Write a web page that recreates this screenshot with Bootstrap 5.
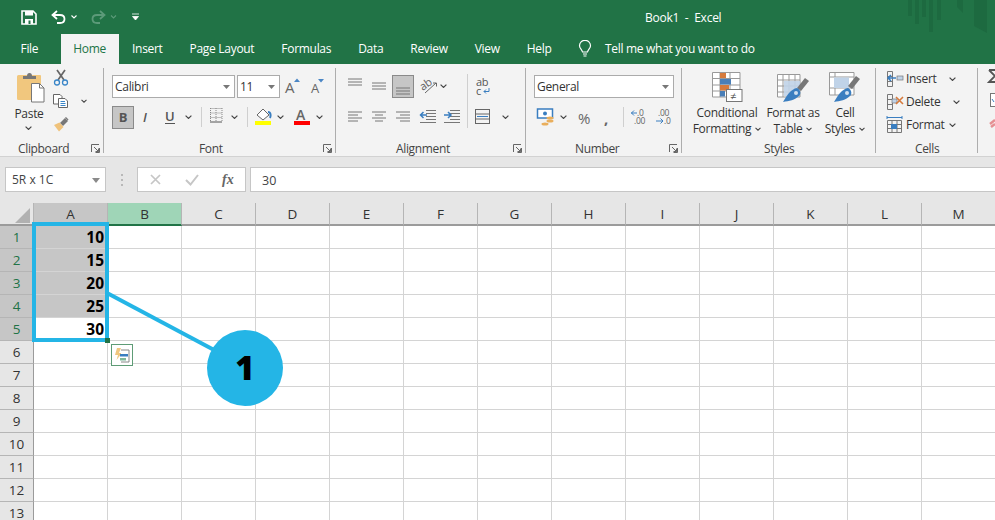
<!DOCTYPE html>
<html lang="en">
<head>
<meta charset="utf-8">
<title>Book1 - Excel</title>
<link href="https://cdn.jsdelivr.net/npm/bootstrap@5.3.0/dist/css/bootstrap.min.css" rel="stylesheet">
<style>
html,body{height:520px;overflow:hidden}
body{background:#fff;font-family:"Open Sans","Noto Sans",sans-serif;font-size:12px;color:#444;line-height:16px}
svg{display:block;flex:none}
svg text{font-family:"Open Sans","Noto Sans",sans-serif}
.xl-app{width:995px;height:520px;overflow:hidden}
.xl-title{height:34px;background:#217346;color:#fff;position:relative}
.xl-qat{padding-left:19px;width:160px}
.xl-doc{position:absolute;left:645px;top:10px;white-space:pre;letter-spacing:-.25px}
.xl-water{position:absolute;right:0;top:0}
.xl-tabs{height:30px;background:#217346;color:#fff;padding-left:7px;letter-spacing:-.3px}
.xl-tab{padding:0 13.5px;height:30px;line-height:29px;white-space:nowrap}
.xl-tab-file{margin-right:9px}
.xl-tab-on{background:#f3f3f3;color:#217346;padding:0 12.5px}
.xl-tell{margin-left:13px;gap:13px;white-space:nowrap}
.xl-ribbon{height:93px;background:#f3f3f3;border-bottom:1px solid #d2d2d2}
.rb-group{height:85px;margin-top:4px;border-right:1px solid #adadad;display:flex;flex-direction:column;flex:none}
.rb-clip{width:104px}.rb-font{width:232px}.rb-align{width:190px}.rb-num{width:156px}.rb-styles{width:194px}.rb-cells{width:102px}.rb-edit{width:17px;border-right:0}
.rb-body{height:72px;display:flex;flex:none;letter-spacing:-.3px}
.rb-label{height:13px;display:flex;letter-spacing:-.35px;line-height:18px;padding-right:3px}
.rb-label svg{margin:4px 0 0 auto}
.lb-clip{padding-left:18px}.lb-font{padding-left:95px}.lb-align{padding-left:60px}.lb-num{padding-left:49px}.lb-styles{padding-left:82px}.lb-cells{padding-left:39px}
.paste-col{width:38px;margin-left:12px;text-align:center}
.paste-icon{margin:4px auto 0}
.paste-word{margin:1px 4px 0 0;height:15px;color:#333}
.paste-caret{margin:5px 0 0 13px}
.font-col{padding:7px 0 0 8px}
.sel-box{height:23px;background:#fff;border:1px solid #ababab;display:flex;align-items:center;justify-content:space-between;padding:0 4px 0 2px;color:#333;flex:none}
.w-font{width:123px}.w-size{width:43px;margin-left:2px}.w-gen{width:140px}
.btn-bold{width:22px;height:23px;background:#c6c6c6;border:1px solid #8a8a8a;text-align:center;font-weight:700;line-height:21px;color:#555;font-size:13px;flex:none}
.font-row2{margin-top:8px}
.align-art{margin-left:10px}
.num-col{padding:7px 0 0 8px}
.num-row2{margin-top:6px}
.style-row{padding-left:6px}
.style-item{text-align:center;flex:none;line-height:16px;padding-top:4px;color:#333}
.style-item>svg{margin:0 auto 2px}
.si-a{width:78px}.si-b{width:54px}.si-c{width:50px}
.cell-row{height:20px;margin-bottom:3px;display:flex;align-items:center;color:#333}
.cells-col{padding:1px 0 0 10px;width:100%}
.xl-fbar{height:46px;background:#e6e6e6;padding:10px 0 0 5px}
.fb-name{width:101px;height:25px;background:#fff;border:1px solid #c6c6c6;padding:1px 5px 0 6px;display:flex;align-items:center;justify-content:space-between;flex:none}
.fb-tools{width:109px;height:25px;background:#fff;border:1px solid #c6c6c6;flex:none;margin-left:31px}
.fb-dots{position:absolute}
.fb-input{flex:1;height:25px;background:#fff;border:1px solid #c6c6c6;border-right:0;margin-left:4px;padding-left:11px;line-height:25px;font-size:12.5px}
.xl-sheet{position:relative;height:317px;overflow:hidden}
.xl-grid{border-collapse:separate;border-spacing:0;table-layout:fixed;width:996px}
.xl-grid th,.xl-grid td{height:23px;padding:0;border-right:1px solid #d4d4d4;border-bottom:1px solid #d4d4d4;box-sizing:border-box}
.xl-grid th{background:#e6e6e6;font-weight:400;text-align:center;font-size:13.5px;color:#333;line-height:20px}
.xl-grid thead th{border-right-color:#b5b5b5;border-bottom:2px solid #9b9b9b;vertical-align:middle}
.xl-grid tbody th{border-right:1px solid #9b9b9b;border-bottom-color:#b5b5b5}
.xl-grid .hd-first{width:34px;position:relative}
.xl-grid .hd-a{background:#c6c6c6}
.xl-grid .hd-b{background:#9fd5b7;border-bottom-color:#217346}
.xl-grid .hd-row-on{background:#c6c6c6;color:#217346}
.xl-grid td.val{text-align:right;padding-right:3px;font-weight:700;font-size:15.5px;color:#000;line-height:20px}
.xl-grid td.val-on{background:#c6c6c6}
.sel-frame{position:absolute;left:32px;top:19px;width:77px;height:120px;border:4px solid #24b5e6}
.sel-handle{position:absolute;left:105px;top:135px;width:5px;height:5px;background:#217346}
.callout{position:absolute;left:0;top:0}
.call-dot{position:absolute;left:207px;top:127px;width:76px;height:76px;border-radius:50%;background:#24b5e6;color:#000;font-weight:800;font-size:33px;line-height:76px;text-align:center}
.qa-btn{position:absolute;left:111px;top:141px;width:22px;height:22px;background:#fff;border:1px solid #5e9c76;padding:2px}
</style>
</head>
<body>
<svg width="0" height="0" style="position:absolute">
<symbol id="cv" viewBox="0 0 7 4"><path d="M.6.6 3.5 3.4 6.4.6" fill="none" stroke="#444" stroke-width="1.2"/></symbol>
<symbol id="lnch" viewBox="0 0 9 9"><path d="M.5 8V.5H8M8.5 4V8.5H4.500M3 3 7.5 7.5M7.5 4.5V7.5H4.500" fill="none" stroke="#666" stroke-width="1"/></symbol>
</svg>
<div class="xl-app d-flex flex-column">
  <div class="xl-title d-flex align-items-center">
    <div class="xl-qat d-flex align-items-center">
      <svg width="120" height="34" viewBox="19 0 120 34">
        <path d="M22 11H33L36 14V24H22Z" fill="none" stroke="#fff" stroke-width="1.6"/><rect x="25" y="11" width="8" height="4.5" fill="#fff"/><rect x="25" y="19" width="8" height="5" fill="#fff"/><rect x="28.5" y="20.5" width="2" height="3.5" fill="#217346"/>
        <path d="M57 11 52.5 15 57 19M53 15H60C66 15 66 23 60 23H57" fill="none" stroke="#fff" stroke-width="1.8"/>
        <path d="M71.500 15.500 74 18 76.500 15.500" fill="none" stroke="#fff" stroke-width="1.100"/>
        <path d="M100 11 104.500 15 100 19M104 15H97C91 15 91 23 97 23H100" fill="none" stroke="#5c9a79" stroke-width="1.8"/>
        <path d="M111 15.500 113.500 18 116 15.500" fill="none" stroke="#5c9a79" stroke-width="1.100"/>
        <path d="M132 14H139M132.500 16.500H138.500L135.500 20Z" fill="#fff" stroke="#fff" stroke-width=".8"/>
      </svg>
    </div>
    <div class="xl-doc">Book1  -  Excel</div>
    <svg class="xl-water" width="90" height="34" viewBox="905 0 90 34"><path d="M908 0H912V16H908ZM915 0H919V24H915ZM922 0H926V17H922ZM929 0H933V32H929ZM937 0H941V20H937ZM957 0H963V13L957 7ZM974 0H987V33L974 26Z" fill="#1d6a40"/></svg>
  </div>
  <div class="xl-tabs d-flex">
    <div class="xl-tab xl-tab-file">File</div>
    <div class="xl-tab xl-tab-on">Home</div>
    <div class="xl-tab">Insert</div>
    <div class="xl-tab">Page Layout</div>
    <div class="xl-tab">Formulas</div>
    <div class="xl-tab">Data</div>
    <div class="xl-tab">Review</div>
    <div class="xl-tab">View</div>
    <div class="xl-tab">Help</div>
    <div class="xl-tell d-flex align-items-center">
      <svg width="14" height="18" viewBox="0 0 14 18"><path d="M4.500 12C4 9.500 1.500 8.500 1.500 5.800A5.500 5.500 0 0 1 12.500 5.800C12.500 8.500 10 9.500 9.500 12ZM5 14H9M5.500 16H8.500" fill="none" stroke="#fff" stroke-width="1.200"/></svg>
      <span>Tell me what you want to do</span>
    </div>
  </div>

  <div class="xl-ribbon d-flex">
    <!-- Clipboard -->
    <div class="rb-group rb-clip">
      <div class="rb-body">
        <div class="paste-col">
          <svg class="paste-icon" width="30" height="33" viewBox="16 72 30 33">
            <path d="M18.500 75H40A1 1 0 0 1 41 76V99A1 1 0 0 1 40 100H18.500A1.500 1.500 0 0 1 17 98.500V76.500A1.500 1.500 0 0 1 18.500 75Z" fill="#f1c77e"/>
            <path d="M23 79V76H27A2.500 3 0 0 1 32 76H36V79Z" fill="#777"/>
            <path d="M31.500 83.500H39.500L44 88V102H31.500Z" fill="#fff" stroke="#777"/><path d="M39.500 83.500V88H44" fill="none" stroke="#777"/>
          </svg>
          <div class="paste-word">Paste</div>
          <svg class="paste-caret" width="7" height="4" viewBox="0 0 7 4"><use href="#cv"/></svg>
        </div>
        <svg width="40" height="68" viewBox="50 68 40 68">
          <path d="M57 70 64 80M65 70 58 80" stroke="#666" stroke-width="1.700"/>
          <circle cx="57" cy="82.500" r="2.500" fill="none" stroke="#3a86c8" stroke-width="1.300"/><circle cx="65" cy="82.500" r="2.500" fill="none" stroke="#3a86c8" stroke-width="1.300"/>
          <path d="M53.500 94.500H60L62 96.500V104H53.500Z" fill="#fff" stroke="#666"/><path d="M58.500 98.500H65L67.500 101V107.500H58.500Z" fill="#fff" stroke="#666"/><path d="M60.500 101.500H65M60.500 103.500H65.500M60.500 105.500H65.500" stroke="#3a86c8"/>
          <use href="#cv" x="81" y="99" width="6" height="4"/>
          <path d="M60 123 65 118 68 121 63 126Z" fill="#777"/><path d="M66 117 68.500 119.500 67.800 120.500 65 117.800Z" fill="#777"/><path d="M54 125 59.500 122.500 63.500 127 59 131.500Z" fill="#efc27b"/>
        </svg>
      </div>
      <div class="rb-label lb-clip"><span>Clipboard</span><svg width="9" height="9"><use href="#lnch"/></svg></div>
    </div>
    <!-- Font -->
    <div class="rb-group rb-font">
      <div class="rb-body">
        <div class="font-col">
          <div class="d-flex">
            <div class="sel-box w-font"><span>Calibri</span><svg width="7" height="4"><path d="M0 0H7L3.500 4Z" fill="#777"/></svg></div>
            <div class="sel-box w-size"><span>11</span><svg width="7" height="4"><path d="M0 0H7L3.500 4Z" fill="#777"/></svg></div>
            <svg width="50" height="23" viewBox="282 75 50 23">
              <text x="287" y="93" font-size="15" fill="#666">A</text><path d="M296 82 299 78.500 302 82Z" fill="#4a86c5"/>
              <text x="313" y="93" font-size="13" fill="#666">A</text><path d="M320 79H326L323 82.500Z" fill="#4a86c5"/>
            </svg>
          </div>
          <div class="d-flex font-row2">
            <div class="btn-bold">B</div>
            <svg width="196" height="23" viewBox="134 106 196 23">
              <text x="143" y="122" font-size="13" font-style="italic" font-weight="600" fill="#555">I</text>
              <text x="165" y="121" font-size="13" font-weight="600" fill="#555">U</text><path d="M165 123.500H175" stroke="#555"/>
              <use href="#cv" x="185" y="115" width="7" height="4"/>
              <path d="M201.500 107V127" stroke="#cfcfcf"/>
              <path d="M210.500 108.500H222M210.500 113H222M210.500 117.500H222M210.500 108V122M216 108V122M222 108V122" stroke="#888" stroke-dasharray="1 1" fill="none"/><path d="M210 122H222" stroke="#555"/>
              <use href="#cv" x="231" y="115" width="7" height="4"/>
              <path d="M247.500 107V127" stroke="#cfcfcf"/>
              <path d="M257 115 263 109 269 115 263 120Z" fill="#fff" stroke="#666"/><path d="M268 112C271 112 271 116 270 118" stroke="#3a7ec0" stroke-width="2" fill="none"/><rect x="255" y="121" width="16" height="4" fill="#ffff00"/>
              <use href="#cv" x="277" y="115" width="7" height="4"/>
              <text x="296" y="120" font-size="14" font-weight="600" fill="#666">A</text><rect x="294" y="121" width="16" height="4" fill="#ff0000"/>
              <use href="#cv" x="316" y="115" width="7" height="4"/>
            </svg>
          </div>
        </div>
      </div>
      <div class="rb-label lb-font"><span>Font</span><svg width="9" height="9"><use href="#lnch"/></svg></div>
    </div>
    <!-- Alignment -->
    <div class="rb-group rb-align">
      <div class="rb-body">
        <svg class="align-art" width="180" height="70" viewBox="346 68 180 70">
          <path d="M348 79H362M348 82H362M348 85H362" stroke="#777"/>
          <path d="M372 83H386M372 86H386M372 89H386" stroke="#777"/>
          <rect x="392.500" y="75.500" width="21" height="22" fill="#c6c6c6" stroke="#8a8a8a"/><path d="M396 88H410M396 91H410M396 94H410" stroke="#777"/>
          <text x="420" y="88" font-size="11" fill="#666" transform="rotate(-35 426 85)">ab</text><path d="M425 93 436 83M433 83H436.500V86.500" stroke="#666" fill="none"/>
          <use href="#cv" x="440" y="84" width="7" height="4"/>
          <path d="M467.500 74V128" stroke="#cfcfcf"/>
          <text x="476" y="86" font-size="11" fill="#555">ab</text><text x="476" y="95" font-size="11" fill="#555">c</text><path d="M489 88V91.500H484M486 89.500 484 91.500 486 93.500" fill="none" stroke="#3a7ec0"/>
          <path d="M348 112H362M348 115H358M348 118H362M348 121H358" stroke="#777"/>
          <path d="M372 112H386M375 115H383M372 118H386M375 121H383" stroke="#777"/>
          <path d="M396 112H410M400 115H410M396 118H410M400 121H410" stroke="#777"/>
          <path d="M426 110.500H436M426 113.500H436M426 116.500H436M426 119.500H436M420 122.500H436" stroke="#777"/><path d="M420 115H427M423.500 112 420.500 115 423.500 118" stroke="#3a7ec0" stroke-width="1.500" fill="none"/>
          <path d="M450 110.500H460M450 113.500H460M450 116.500H460M450 119.500H460M444 122.500H460" stroke="#777"/><path d="M444 115H451M448 112 451 115 448 118" stroke="#3a7ec0" stroke-width="1.500" fill="none"/>
          <rect x="475.500" y="109.500" width="14" height="14" fill="none" stroke="#666"/><path d="M475 114H490M475 119H490" stroke="#666"/><path d="M477 116.500H488" stroke="#3a7ec0"/>
          <use href="#cv" x="502" y="115" width="7" height="4"/>
        </svg>
      </div>
      <div class="rb-label lb-align"><span>Alignment</span><svg width="9" height="9"><use href="#lnch"/></svg></div>
    </div>
    <!-- Number -->
    <div class="rb-group rb-num">
      <div class="rb-body">
        <div class="num-col">
          <div class="sel-box w-gen"><span>General</span><svg width="7" height="4"><path d="M0 0H7L3.500 4Z" fill="#777"/></svg></div>
          <svg class="num-row2" width="140" height="24" viewBox="534 104 140 24">
            <rect x="537.500" y="109" width="15" height="9" fill="#fff" stroke="#3a7ec0" stroke-width="1.500"/><circle cx="545" cy="113.500" r="2" fill="#3a7ec0"/>
            <ellipse cx="550" cy="118" rx="3.500" ry="1.500" fill="#e9ae5c"/><ellipse cx="550" cy="121" rx="3.500" ry="1.500" fill="#e9ae5c"/><ellipse cx="545" cy="124" rx="3.500" ry="1.500" fill="#e9ae5c"/>
            <use href="#cv" x="560" y="115" width="7" height="4"/>
            <text x="578" y="124" font-size="15" fill="#666">%</text>
            <text x="604" y="124" font-size="15" font-weight="700" fill="#666">,</text>
            <path d="M623.500 107V127" stroke="#cfcfcf"/>
            <text x="637" y="116" font-size="8.500" fill="#666">.0</text><text x="634" y="124" font-size="8.500" fill="#666">.00</text><path d="M631 113H637M634 110.500 631.500 113 634 115.500" stroke="#3a7ec0" fill="none"/>
            <text x="658" y="116" font-size="8.500" fill="#666">.00</text><text x="664" y="124" font-size="8.500" fill="#666">.0</text><path d="M656 121H663M660.500 118.500 663 121 660.500 123.500" stroke="#3a7ec0" fill="none"/>
          </svg>
        </div>
      </div>
      <div class="rb-label lb-num"><span>Number</span><svg width="9" height="9"><use href="#lnch"/></svg></div>
    </div>
    <!-- Styles -->
    <div class="rb-group rb-styles">
      <div class="rb-body style-row">
        <div class="style-item si-a">
          <svg width="32" height="31" viewBox="712 72 32 31">
            <path d="M713.500 72.500H741V97H713.500ZM713.500 78.500H741M713.500 85H741M713.500 91H741M721 72V97M731 72V97" fill="#fff" stroke="#999"/>
            <rect x="721" y="73" width="6" height="5" fill="#d67a3c"/><rect x="721" y="79" width="11" height="5.500" fill="#4a7fb8"/><rect x="721" y="85" width="9" height="5.500" fill="#d67a3c"/><rect x="721" y="91" width="5" height="5.500" fill="#4a7fb8"/>
            <rect x="727.500" y="89.500" width="15.500" height="12" fill="#fff" stroke="#777"/><text x="731" y="100" font-size="11" fill="#555">≠</text>
          </svg>
          <div>Conditional</div>
          <div class="d-flex justify-content-center align-items-center gap-1">Formatting<svg width="6" height="4"><use href="#cv" width="6" height="4"/></svg></div>
        </div>
        <div class="style-item si-b">
          <svg width="34" height="31" viewBox="779 72 34 31">
            <path d="M780.500 74.500H803V97H780.500ZM780.500 80H803M780.500 86H803M780.500 92H803M786 74V97M792 74V97M798 74V97" fill="#fff" stroke="#999"/><rect x="787" y="81" width="16" height="15" fill="#c0d3e8" opacity=".9"/>
            <path d="M800 88 808 78 812 81 804 91Z" fill="#777"/><path d="M786 102C790 95 794 89 800 88 804 90 804 94 802 96 798 100 792 101 786 102Z" fill="#3a7ec0"/><circle cx="799" cy="93" r="2" fill="#cfe0f0"/>
          </svg>
          <div>Format as</div>
          <div class="d-flex justify-content-center align-items-center gap-1">Table<svg width="6" height="4"><use href="#cv" width="6" height="4"/></svg></div>
        </div>
        <div class="style-item si-c">
          <svg width="34" height="31" viewBox="831 72 34 31">
            <path d="M832.500 72.500H857V95H832.500Z" fill="#fff" stroke="#999"/><path d="M832.500 77H857M832.500 88H857M838 88V95M851 88V95M838 72V77" stroke="#999"/><rect x="837" y="77.500" width="15" height="10.500" fill="#c0d3e8"/>
            <path d="M851 86 859 76 863 79 855 89Z" fill="#777"/><path d="M837 102C841 95 845 89 851 88 855 90 855 94 853 96 849 100 843 101 837 102Z" fill="#3a7ec0"/><circle cx="850" cy="93" r="2" fill="#cfe0f0"/>
          </svg>
          <div>Cell</div>
          <div class="d-flex justify-content-center align-items-center gap-1">Styles<svg width="6" height="4"><use href="#cv" width="6" height="4"/></svg></div>
        </div>
      </div>
      <div class="rb-label lb-styles"><span>Styles</span></div>
    </div>
    <!-- Cells -->
    <div class="rb-group rb-cells">
      <div class="rb-body">
        <div class="cells-col">
          <div class="cell-row">
            <svg width="20" height="18" viewBox="886 69 20 18"><path d="M887.500 70.500H892.500V85.500H887.500ZM887.500 75.500H893M887.500 80.500H893" fill="none" stroke="#777"/><rect x="897" y="75" width="6" height="4" fill="#c0d3e8" stroke="#777" stroke-width=".7"/><path d="M888 77H896M891 74 888 77 891 80" stroke="#3a7ec0" stroke-width="1.500" fill="none"/></svg>
            <span>Insert</span><svg class="ms-auto" style="margin-right:21px" width="7" height="4"><use href="#cv"/></svg>
          </div>
          <div class="cell-row">
            <svg width="20" height="18" viewBox="886 92 20 18"><path d="M887.500 93.500H892.500V108.500H887.500ZM887.500 98.500H893M887.500 103.500H893" fill="none" stroke="#777"/><rect x="892" y="98" width="5" height="4" fill="#c0d3e8" stroke="#777" stroke-width=".7"/><path d="M896 96 903 103M903 96 896 103" stroke="#d67a3c" stroke-width="1.600"/></svg>
            <span>Delete</span><svg class="ms-auto" style="margin-right:17px" width="7" height="4"><use href="#cv"/></svg>
          </div>
          <div class="cell-row">
            <svg width="20" height="18" viewBox="886 115 20 18"><path d="M887.500 119.500H901.500V131.500H887.500ZM887.500 123.500H901.500M887.500 127.500H901.500M892 119V132M897 119V132" fill="none" stroke="#777"/><rect x="891" y="123" width="6" height="5" fill="#3a7ec0"/><path d="M887 116.500H902M887 115V118M902 115V118" stroke="#3a7ec0"/></svg>
            <span>Format</span><svg class="ms-1" width="7" height="4"><use href="#cv"/></svg>
          </div>
        </div>
      </div>
      <div class="rb-label lb-cells"><span>Cells</span></div>
    </div>
    <!-- Editing (cut off) -->
    <div class="rb-group rb-edit">
      <svg width="17" height="68" viewBox="978 68 17 68">
        <path d="M989 70H995M989 70 995 76 989 82H995" fill="none" stroke="#555" stroke-width="1.800"/>
        <rect x="990.500" y="93.500" width="6" height="13" fill="#fff" stroke="#777"/><path d="M992 99 994 102" stroke="#3a7ec0"/>
        <path d="M990 124 995 120M991 127 995 124" stroke="#e58f93" stroke-width="2.500"/>
      </svg>
    </div>
  </div>

  <div class="xl-fbar d-flex position-relative">
    <div class="fb-name"><span>5R x 1C</span><svg width="8" height="5"><path d="M0 0H8L4 5Z" fill="#8a8a8a"/></svg></div>
    <svg class="fb-dots" style="left:120px;top:16px" width="4" height="14"><path d="M1 1H3V3H1ZM1 6H3V8H1ZM1 11H3V13H1Z" fill="#b8b8b8"/></svg>
    <div class="fb-tools">
      <svg width="107" height="23" viewBox="138 168 107 23">
        <path d="M151 175 160 184M160 175 151 184" stroke="#c6c6c6" stroke-width="1.700"/>
        <path d="M186 180 190.500 184.500 198 175" fill="none" stroke="#c6c6c6" stroke-width="2"/>
        <text x="222" y="184" font-size="14" font-style="italic" font-weight="700" fill="#666" style="font-family:'Liberation Serif',serif">fx</text>
      </svg>
    </div>
    <div class="fb-input">30</div>
  </div>

  <div class="xl-sheet">
    <table class="xl-grid">
      <thead>
        <tr>
          <th class="hd-first"><svg class="position-absolute" style="left:15px;top:5px" width="15" height="15"><path d="M15 0V15H0Z" fill="#b1b1b1"/></svg></th>
          <th class="hd-a">A</th><th class="hd-b">B</th><th>C</th><th>D</th><th>E</th><th>F</th><th>G</th><th>H</th><th>I</th><th>J</th><th>K</th><th>L</th><th>M</th>
        </tr>
      </thead>
      <tbody>
        <tr><th class="hd-row-on">1</th><td class="val val-on">10</td><td></td><td></td><td></td><td></td><td></td><td></td><td></td><td></td><td></td><td></td><td></td><td></td></tr>
        <tr><th class="hd-row-on">2</th><td class="val val-on">15</td><td></td><td></td><td></td><td></td><td></td><td></td><td></td><td></td><td></td><td></td><td></td><td></td></tr>
        <tr><th class="hd-row-on">3</th><td class="val val-on">20</td><td></td><td></td><td></td><td></td><td></td><td></td><td></td><td></td><td></td><td></td><td></td><td></td></tr>
        <tr><th class="hd-row-on">4</th><td class="val val-on">25</td><td></td><td></td><td></td><td></td><td></td><td></td><td></td><td></td><td></td><td></td><td></td><td></td></tr>
        <tr><th class="hd-row-on">5</th><td class="val">30</td><td></td><td></td><td></td><td></td><td></td><td></td><td></td><td></td><td></td><td></td><td></td><td></td></tr>
        <tr><th>6</th><td></td><td></td><td></td><td></td><td></td><td></td><td></td><td></td><td></td><td></td><td></td><td></td><td></td></tr>
        <tr><th>7</th><td></td><td></td><td></td><td></td><td></td><td></td><td></td><td></td><td></td><td></td><td></td><td></td><td></td></tr>
        <tr><th>8</th><td></td><td></td><td></td><td></td><td></td><td></td><td></td><td></td><td></td><td></td><td></td><td></td><td></td></tr>
        <tr><th>9</th><td></td><td></td><td></td><td></td><td></td><td></td><td></td><td></td><td></td><td></td><td></td><td></td><td></td></tr>
        <tr><th>10</th><td></td><td></td><td></td><td></td><td></td><td></td><td></td><td></td><td></td><td></td><td></td><td></td><td></td></tr>
        <tr><th>11</th><td></td><td></td><td></td><td></td><td></td><td></td><td></td><td></td><td></td><td></td><td></td><td></td><td></td></tr>
        <tr><th>12</th><td></td><td></td><td></td><td></td><td></td><td></td><td></td><td></td><td></td><td></td><td></td><td></td><td></td></tr>
        <tr><th>13</th><td></td><td></td><td></td><td></td><td></td><td></td><td></td><td></td><td></td><td></td><td></td><td></td><td></td></tr>
      </tbody>
    </table>
    <div class="sel-frame"></div>
    <div class="sel-handle"></div>
    <div class="qa-btn">
      <svg width="18" height="18" viewBox="0 0 18 18"><path d="M3 1 1 8H4L2.500 13 8 6H5L7 1Z" fill="#f0c77f"/><path d="M7 3H15V15H7" fill="#fff" stroke="#888"/><rect x="6" y="7" width="8" height="2.500" fill="#3a7ec0"/><rect x="6" y="11" width="6" height="2.500" fill="#7fb89a"/></svg>
    </div>
    <svg class="callout" width="300" height="220"><path d="M107 90 216 148" stroke="#24b5e6" stroke-width="4"/></svg>
    <div class="call-dot">1</div>
  </div>
</div>
</body>
</html>
